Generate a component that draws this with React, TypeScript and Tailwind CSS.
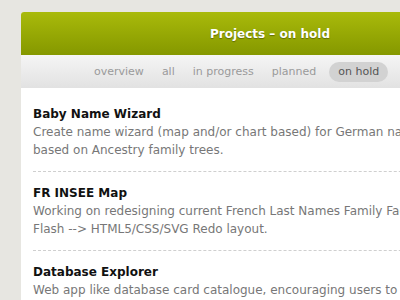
const tabs = ["overview", "all", "in progress", "planned", "on hold"];

const projects = [
  {
    title: "Baby Name Wizard",
    text: "Create name wizard (map and/or chart based) for German names based on Ancestry family trees.",
  },
  {
    title: "FR INSEE Map",
    text: "Working on redesigning current French Last Names Family Facts Flash --> HTML5/CSS/SVG Redo layout.",
  },
  {
    title: "Database Explorer",
    text: "Web app like database card catalogue, encouraging users to browse and discover records.",
  },
];

export default function App() {
  return (
    <div className="w-screen h-screen overflow-hidden bg-[#e7e6e1] pt-3 pl-[21px] font-['DejaVu_Sans',sans-serif]">
      <div className="w-[498px] bg-white rounded-tl-[3px] rounded-tr-[3px] overflow-hidden">
        <div className="h-[43px] flex items-center justify-center bg-gradient-to-b from-[#a9ba0b] to-[#859800]">
          <h1 className="text-[12px] font-bold text-white [text-shadow:0_1px_1px_rgba(0,0,0,0.35)]">
            Projects – on hold
          </h1>
        </div>
        <div className="h-[33px] flex items-center pl-[64px] bg-gradient-to-b from-[#f5f5f5] to-[#e2e2e2]">
          {tabs.map((t) => (
            <span
              key={t}
              className={
                t === "on hold"
                  ? "ml-[4px] px-[9px] h-[20px] leading-[20px] rounded-full bg-[#d2d2d2] text-[11px] text-[#555]"
                  : "px-[9px] h-[20px] leading-[20px] text-[11px] text-[#9a9a9a]"
              }
            >
              {t}
            </span>
          ))}
        </div>
        <div className="pt-[5px] px-3">
          {projects.map((p) => (
            <div key={p.title} className="pt-[12px] pb-[12px] border-b border-dashed border-[#cfcfcf]">
              <h2 className="text-[12px] leading-[18px] font-bold text-[#111]">{p.title}</h2>
              <p className="text-[12px] leading-[18px] text-[#777] w-[405px]">{p.text}</p>
            </div>
          ))}
        </div>
      </div>
    </div>
  );
}
